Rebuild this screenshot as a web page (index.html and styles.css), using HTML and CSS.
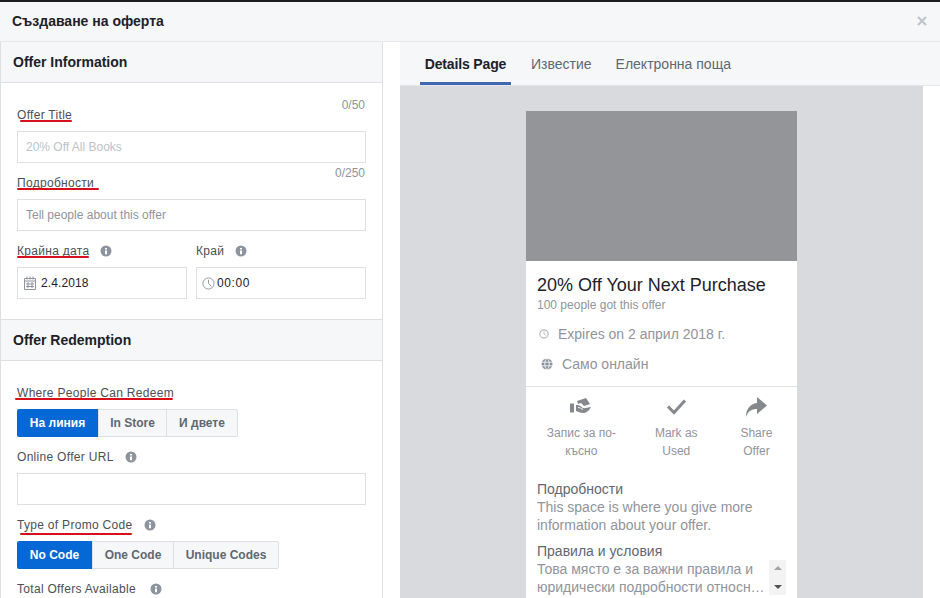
FILE: index.html
```html
<!DOCTYPE html>
<html>

<head>
    <meta charset="UTF-8">
    <title>Създаване на оферта</title>
    <link rel="stylesheet" href="styles.css">
</head>

<body>
    <div class="dialog">
        <div class="dialog-head">
            <span class="dialog-title">Създаване на оферта</span>
            <svg class="close" viewBox="0 0 10 10" width="10" height="10">
                <path d="M1 1l8 8M9 1l-8 8" stroke="currentColor" stroke-width="2" fill="none" />
            </svg>
        </div>
        <div class="dialog-body">
            <div class="form-panel">
                <div class="section-head">Offer Information</div>
                <div class="section-body">
                    <div class="field">
                        <div class="label-row">
                            <span class="label marked mark-title">Offer Title</span>
                            <span class="counter">0/50</span>
                        </div>
                        <div class="input placeholder">20% Off All Books</div>
                    </div>
                    <div class="field">
                        <div class="label-row">
                            <span class="label marked mark-details">Подробности</span>
                            <span class="counter">0/250</span>
                        </div>
                        <div class="input placeholder dim">Tell people about this offer</div>
                    </div>
                    <div class="field-pair">
                        <div class="field">
                            <div class="label-row start">
                                <span class="label marked">Крайна дата</span>
                                <svg class="info" viewBox="0 0 12 12" width="12" height="12">
                                    <circle cx="6" cy="6" r="5.5" fill="currentColor" />
                                    <path d="M5 3h2v1.6H5zM5 5.6h2v3.6H5z" fill="#fff" />
                                </svg>
                            </div>
                            <div class="input with-icon">
                                <svg class="input-icon" viewBox="0 0 12 14" width="12" height="14">
                                    <path d="M.5 2.5h11v11H.5zM.5 5h11M3 .5v3M6 .5v3M9 .5v3M4 6v6M8 6v6M2 8h8M2 10.500h8" stroke="#8d949e" fill="none" />
                                </svg>
                                <span>2.4.2018</span>
                            </div>
                        </div>
                        <div class="field">
                            <div class="label-row start">
                                <span class="label">Край</span>
                                <svg class="info" viewBox="0 0 12 12" width="12" height="12">
                                    <circle cx="6" cy="6" r="5.5" fill="currentColor" />
                                    <path d="M5 3h2v1.6H5zM5 5.6h2v3.6H5z" fill="#fff" />
                                </svg>
                            </div>
                            <div class="input with-icon tight">
                                <svg class="input-icon" viewBox="0 0 14 14" width="13" height="13">
                                    <circle cx="7" cy="7" r="6" stroke="#8d949e" fill="none" />
                                    <path d="M7 3v4l3 3" stroke="#8d949e" fill="none" />
                                </svg>
                                <span class="time">00:00</span>
                            </div>
                        </div>
                    </div>
                </div>

                <div class="section-head">Offer Redemption</div>
                <div class="section-body">
                    <div class="field">
                        <div class="label-row">
                            <span class="label marked mark-where">Where People Can Redeem</span>
                        </div>
                        <div class="segmented">
                            <span class="seg active seg-online">На линия</span>
                            <span class="seg seg-store">In Store</span>
                            <span class="seg seg-both">И двете</span>
                        </div>
                    </div>
                    <div class="field">
                        <div class="label-row start">
                            <span class="label">Online Offer URL</span>
                            <svg class="info" viewBox="0 0 12 12" width="12" height="12">
                                <circle cx="6" cy="6" r="5.5" fill="currentColor" />
                                <path d="M5 3h2v1.6H5zM5 5.6h2v3.6H5z" fill="#fff" />
                            </svg>
                        </div>
                        <div class="input"></div>
                    </div>
                    <div class="field">
                        <div class="label-row start wide">
                            <span class="label marked mark-type">Type of Promo Code</span>
                            <svg class="info" viewBox="0 0 12 12" width="12" height="12">
                                <circle cx="6" cy="6" r="5.5" fill="currentColor" />
                                <path d="M5 3h2v1.6H5zM5 5.6h2v3.6H5z" fill="#fff" />
                            </svg>
                        </div>
                        <div class="segmented">
                            <span class="seg active seg-nocode">No Code</span>
                            <span class="seg seg-one">One Code</span>
                            <span class="seg seg-unique">Unique Codes</span>
                        </div>
                    </div>
                    <div class="field">
                        <div class="label-row start wider">
                            <span class="label">Total Offers Available</span>
                            <svg class="info" viewBox="0 0 12 12" width="12" height="12">
                                <circle cx="6" cy="6" r="5.5" fill="currentColor" />
                                <path d="M5 3h2v1.6H5zM5 5.6h2v3.6H5z" fill="#fff" />
                            </svg>
                        </div>
                    </div>
                </div>
            </div>

            <div class="preview-panel">
                <div class="tabs">
                    <span class="tab current">Details Page</span>
                    <span class="tab">Известие</span>
                    <span class="tab">Електронна поща</span>
                </div>
                <div class="preview">
                    <div class="card">
                        <div class="card-image"></div>
                        <div class="card-info">
                            <div class="card-title">20% Off Your Next Purchase</div>
                            <div class="card-sub">100 people got this offer</div>
                            <div class="meta">
                                <svg viewBox="0 0 12 12" width="10" height="10">
                                    <circle cx="6" cy="6" r="5" stroke="#b4b7bc" stroke-width="1.400" fill="none" />
                                    <path d="M6 3v3.300l2 1" stroke="#b4b7bc" fill="none" />
                                </svg>
                                <span>Expires on 2 април 2018 г.</span>
                            </div>
                            <div class="meta">
                                <svg class="globe" viewBox="0 0 12 12" width="12" height="12">
                                    <circle cx="6" cy="6" r="5.500" fill="#8d949e" />
                                    <path d="M0 4.200h12M0 7.800h12M6 0c-3 3-3 9 0 12M6 0c3 3 3 9 0 12" stroke="#fff" stroke-width=".8" fill="none" />
                                </svg>
                                <span>Само онлайн</span>
                            </div>
                        </div>
                        <div class="actions">
                            <div class="action">
                                <svg viewBox="0 0 24 20" width="24" height="20">
                                    <path d="M1 6.500h4v9H1z" fill="#85888d" />
                                    <path d="M8 4l9-3 4 6-6 2-3-3-3 1z" fill="#85888d" />
                                    <path d="M7 8c3-.5 5 1 7 3 2 .500 5-.500 8-1-2 4-5 6-8 6-2 0-4-1-7-2z" fill="#85888d" />
                                    <path d="M9 10.500c2 0 3 1 5 2" stroke="#fff" fill="none" />
                                </svg>
                                <span>Запис за по-късно</span>
                            </div>
                            <div class="action">
                                <svg viewBox="0 0 24 20" width="24" height="20">
                                    <path d="M4 9.500l6 6L21 3.500" stroke="#85888d" stroke-width="3" fill="none" />
                                </svg>
                                <span>Mark as Used</span>
                            </div>
                            <div class="action">
                                <svg viewBox="0 0 24 20" width="24" height="20">
                                    <path d="M13 0l10 8.500L13 17v-5C8 12 4 14 2 20c0-8 4-13 11-14z" fill="#85888d" />
                                </svg>
                                <span>Share Offer</span>
                            </div>
                        </div>
                        <div class="card-text">
                            <div class="text-head">Подробности</div>
                            <div class="text-line">This space is where you give more information about your offer.</div>
                        </div>
                        <div class="card-text terms">
                            <div class="text-head">Правила и условия</div>
                            <div class="terms-row">
                                <div class="text-line">Това място е за важни правила и юридически подробности относн…</div>
                                <div class="scrollbar">
                                    <span class="arrow up"></span>
                                    <span class="arrow down"></span>
                                </div>
                            </div>
                        </div>
                    </div>
                </div>
            </div>
        </div>
    </div>
</body>

</html>
```

FILE: styles.css
```css
* {
    box-sizing: border-box;
}

html,
body {
    margin: 0;
    height: 100%;
    overflow: hidden;
}

body {
    background: #fff;
    font-family: "Liberation Sans", "Noto Sans", Arial, sans-serif;
    color: #4b4f56;
}

.dialog {
    height: 598px;
    border-top: 2px solid #1d1e22;
    display: flex;
    flex-direction: column;
}

.dialog-head {
    height: 40px;
    flex: none;
    display: flex;
    align-items: center;
    justify-content: space-between;
    padding: 0 13px 1px 12px;
    background: #f6f7f9;
    border-bottom: 1px solid #e5e6e9;
}

.dialog-title {
    font-size: 14px;
    font-weight: bold;
    color: #1d2129;
}

.close {
    color: #bec2c9;
}

.dialog-body {
    flex: 1;
    min-height: 0;
    display: flex;
}

.form-panel {
    width: 383px;
    flex: none;
    border-left: 1px solid #dddfe2;
    border-right: 1px solid #dddfe2;
    overflow: hidden;
}

.section-head {
    height: 41px;
    padding: 0 12px 1px;
    display: flex;
    align-items: center;
    background: #f6f7f9;
    border-bottom: 1px solid #dddfe2;
    font-size: 14px;
    font-weight: bold;
    color: #1d2129;
}

.section-body {
    padding: 23px 16px 20px;
    display: flex;
    flex-direction: column;
    gap: 11px;
    border-bottom: 1px solid #dddfe2;
}

.field {
    display: flex;
    flex-direction: column;
    gap: 7px;
}

.field-pair {
    display: grid;
    grid-template-columns: 170px 170px;
    gap: 9px;
}

.label-row {
    height: 18px;
    display: flex;
    align-items: center;
    justify-content: space-between;
}

.label-row.start {
    justify-content: flex-start;
    gap: 11px;
}

.label-row.wide {
    gap: 12px;
}

.label-row.wider {
    gap: 14px;
}

.label {
    position: relative;
    font-size: 12px;
    letter-spacing: .3px;
    color: #4b4f56;
    font-weight: normal;
}

/* red marker strokes drawn over the screenshot */
.label.marked::after {
    content: "";
    position: absolute;
    left: 0;
    right: 0;
    bottom: 0;
    height: 2px;
    border-radius: 1px;
    background: #d8101c;
}

.label.mark-title::after {
    left: 3px;
}

.label.mark-details::after {
    right: -5px;
}

.label.mark-where::after {
    left: -2px;
    right: 1px;
}

.label.mark-type::after {
    left: 3px;
    bottom: -3px;
}

.counter {
    align-self: flex-start;
    margin-top: -8px;
    margin-right: 1px;
    line-height: 14px;
    font-size: 12px;
    color: #90949c;
}

.info {
    color: #8d949e;
}

.input {
    height: 32px;
    display: flex;
    align-items: center;
    padding: 0 8px;
    background: #fff;
    border: 1px solid #dddfe2;
    font-size: 12px;
    color: #1d2129;
}

.placeholder {
    color: #bec2c9;
}

.placeholder.dim {
    color: #90949c;
}

.with-icon {
    gap: 5px;
    padding-left: 6px;
    letter-spacing: .1px;
}

.with-icon.tight {
    padding-left: 5px;
    gap: 2px;
}

.time {
    letter-spacing: .6px;
}

.input-icon {
    flex: none;
}

.segmented {
    height: 28px;
    display: flex;
    align-self: flex-start;
    border: 1px solid #dddfe2;
    border-radius: 2px;
    background: #f6f7f9;
    font-size: 12px;
    font-weight: bold;
    color: #606770;
}

.seg {
    display: flex;
    align-items: center;
    justify-content: center;
    border-left: 1px solid #dddfe2;
}

.seg.active {
    margin: -1px 0 -1px -1px;
    height: 28px;
    border: 0;
    border-radius: 2px 0 0 2px;
    background: #0668d4;
    color: #fff;
}

.seg-online {
    width: 81px;
}

.seg-store {
    width: 68px;
}

.seg-both {
    width: 71px;
}

.seg-nocode {
    width: 75px;
}

.seg-one {
    width: 81px;
}

.seg-unique {
    width: 105px;
}

.preview-panel {
    margin-left: 17px;
    width: 540px;
    flex: none;
    display: flex;
    flex-direction: column;
}

.tabs {
    height: 44px;
    flex: none;
    display: flex;
    gap: 4px;
    padding-left: 20px;
    background: #f6f7f9;
    border-bottom: 1px solid #e5e6e9;
}

.tab {
    height: 43px;
    display: flex;
    align-items: center;
    padding: 1px 20px 0 0;
    font-size: 14px;
    color: #606770;
}

.tab.current {
    width: 91px;
    padding: 4px 0 0;
    margin-right: 16px;
    justify-content: center;
    border-bottom: 3px solid #4267b2;
    font-weight: bold;
    letter-spacing: -.15px;
    color: #1d2129;
}

.preview {
    flex: 1;
    min-height: 0;
    width: 523px;
    padding: 25px 0 0 126px;
    background: #d9dadd;
    overflow: hidden;
}

.card {
    width: 271px;
    padding-bottom: 12px;
    background: #fff;
}

.card-image {
    height: 150px;
    background: #949598;
}

.card-info {
    padding: 13px 11px 7px;
    border-bottom: 1px solid #dddfe2;
}

.card-title {
    font-size: 18px;
    line-height: 22px;
    color: #1d2129;
}

.card-sub {
    margin-top: 1px;
    font-size: 12px;
    line-height: 16px;
    color: #90949c;
}

.meta {
    height: 30px;
    display: flex;
    align-items: center;
    gap: 9px;
    padding-left: 2px;
    font-size: 14px;
    color: #90949c;
}

.card-sub + .meta {
    margin-top: 6px;
}

.globe {
    margin-left: 2px;
}

.actions {
    display: flex;
    gap: 21px;
    padding: 10px 11px 0;
}

.action {
    width: 60px;
    display: flex;
    flex-direction: column;
    align-items: center;
    text-align: center;
    font-size: 12px;
    line-height: 18px;
    color: #90949c;
}

.action:first-child {
    width: 90px;
}

.action svg {
    margin-bottom: 7px;
}

.card-text {
    padding: 20px 11px 0;
    font-size: 14px;
    line-height: 18px;
}

.card-text.terms {
    padding-top: 8px;
}

.text-head {
    color: #606770;
}

.text-line {
    color: #90949c;
}

.terms-row {
    display: flex;
    gap: 2px;
}

.scrollbar {
    width: 17px;
    height: 35px;
    flex: none;
    display: flex;
    flex-direction: column;
    align-items: center;
    justify-content: space-between;
    padding: 6px 0;
    background: #f3f3f4;
}

.arrow {
    width: 0;
    height: 0;
    border-left: 4px solid transparent;
    border-right: 4px solid transparent;
}

.arrow.up {
    border-bottom: 4px solid #a3a3a3;
}

.arrow.down {
    border-top: 4px solid #505050;
}
```
